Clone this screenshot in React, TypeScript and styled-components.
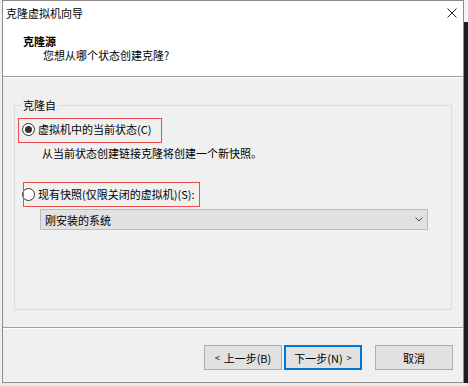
import { createGlobalStyle, styled } from "styled-components"

const GlobalStyle = createGlobalStyle`
  html, body {
    margin: 0;
    padding: 0;
  }
  body {
    width: 468px;
    height: 386px;
    overflow: hidden;
    background: #e9e9e9;
    font-family: "Noto Sans CJK SC", "Microsoft YaHei", sans-serif;
    font-size: 11px;
    color: #000;
  }
`

const Desktop = styled.div`
  display: flex;
  flex-flow: row nowrap;
  align-items: flex-start;
  height: 386px;
`

const LeftEdge = styled.div`
  width: 2px;
  height: 383px;
  background: #eef0f2;
`

const RightEdge = styled.div`
  flex: 1;
  height: 383px;
  display: flex;
  flex-flow: column nowrap;

  .edge__top {
    height: 22px;
    background: #f4f4f4;
  }
  .edge__rest {
    flex: 1;
    background: #1c1c1c;
  }
`

const Window = styled.div`
  width: 462px;
  height: 383px;
  box-sizing: border-box;
  border: 1px solid #8c8c8c;
  background: #f0f0f0;
  display: flex;
  flex-flow: column nowrap;
`

const TitleBar = styled.div`
  height: 23px;
  background: #fff;
  display: flex;
  align-items: center;
  justify-content: space-between;
  padding: 0 6px 0 3px;
  line-height: 14px;

  svg {
    display: block;
    margin-right: 0;
  }
`

const Header = styled.div`
  height: 52px;
  box-sizing: border-box;
  background: #fff;
  padding: 10px 0 0 20px;

  .header__title {
    font-weight: bold;
    line-height: 14px;
  }
  .header__subtitle {
    line-height: 14px;
    padding-left: 20px;
  }
`

const Separator = styled.div`
  height: 0;
  border-top: 1px solid #a0a0a0;
  border-bottom: 1px solid #fff;
`

const Body = styled.div`
  height: 249px;
  box-sizing: border-box;
  padding-top: 19px;
  overflow: hidden;
`

const GroupBox = styled.fieldset`
  margin: 0 11px;
  padding: 0 0 79px 0;
  border: 1px solid #dcdcdc;
  min-width: 0;

  legend {
    margin-left: 6px;
    padding: 0 2px;
    line-height: 16px;
  }
`

const OptionRow = styled.label<{ $top: number }>`
  position: relative;
  display: flex;
  align-items: center;
  gap: 3px;
  height: 16px;
  line-height: 16px;
  margin: ${p => p.$top}px 0 0 7px;
  white-space: nowrap;
`

const Radio = styled.span<{ $checked?: boolean }>`
  width: 13px;
  height: 13px;
  box-sizing: border-box;
  border: 1px solid #333;
  border-radius: 50%;
  background: #fff;
  display: flex;
  align-items: center;
  justify-content: center;

  &::after {
    content: "";
    width: 7px;
    height: 7px;
    border-radius: 50%;
    background: ${p => (p.$checked ? "#333" : "transparent")};
  }
`

// red annotation box drawn over the option
const Highlight = styled.span<{ $x: number; $y: number; $w: number; $h: number }>`
  position: absolute;
  left: ${p => p.$x}px;
  top: ${p => p.$y}px;
  width: ${p => p.$w}px;
  height: ${p => p.$h}px;
  box-sizing: border-box;
  border: 1px solid #e84c4c;
  pointer-events: none;
`

const Description = styled.p`
  margin: 8px 0 0 27px;
  line-height: 16px;
  white-space: nowrap;
`

const Select = styled.div`
  margin: 7px 0 0 25px;
  width: 388px;
  height: 21px;
  box-sizing: border-box;
  border: 1px solid #bcbcbc;
  background: #e1e1e1;
  display: flex;
  align-items: center;
  justify-content: space-between;
  padding: 0 4px 0 4px;
  line-height: 16px;
`

const Footer = styled.div`
  flex: 1;
  display: flex;
  justify-content: flex-end;
  align-items: flex-start;
  padding: 16px 10px 0 0;
`

const Button = styled.button<{ $default?: boolean; $gap?: number }>`
  width: 78px;
  height: 25px;
  margin-left: ${p => p.$gap ?? 0}px;
  box-sizing: border-box;
  border: 1px solid ${p => (p.$default ? "#0078d7" : "#adadad")};
  box-shadow: ${p => (p.$default ? "inset 0 0 0 1px #0078d7" : "none")};
  background: #e1e1e1;
  font-family: inherit;
  font-size: 11px;
  color: #000;
  padding: 0;
  display: flex;
  align-items: center;
  justify-content: center;
  gap: 4px;

  .btn__arrow {
    font-size: 9px;
  }
`

const CloseIcon = () => (
  <svg width="10" height="10" viewBox="0 0 10 10">
    <path d="M0.5 0.5 L9.5 9.5 M9.5 0.5 L0.5 9.5" stroke="#222" strokeWidth="1" fill="none" />
  </svg>
)

const ChevronIcon = () => (
  <svg width="8" height="5" viewBox="0 0 8 5">
    <path d="M0.5 0.5 L4 4 L7.5 0.5" stroke="#444" strokeWidth="1" fill="none" />
  </svg>
)

export default function App() {
  return (
    <>
      <GlobalStyle />
      <Desktop>
        <LeftEdge />
        <Window>
          <TitleBar>
            <span>克隆虚拟机向导</span>
            <CloseIcon />
          </TitleBar>
          <Header>
            <div className="header__title">克隆源</div>
            <div className="header__subtitle">您想从哪个状态创建克隆?</div>
          </Header>
          <Separator />
          <Body>
            <GroupBox>
              <legend>克隆自</legend>
              <OptionRow $top={8}>
                <Radio $checked />
                <span>虚拟机中的当前状态(C)</span>
                <Highlight $x={-4} $y={-3} $w={144} $h={25} />
              </OptionRow>
              <Description>从当前状态创建链接克隆将创建一个新快照。</Description>
              <OptionRow $top={25}>
                <Radio />
                <span>现有快照(仅限关闭的虚拟机)(S):</span>
                <Highlight $x={1} $y={-4} $w={177} $h={25} />
              </OptionRow>
              <Select>
                <span>刚安装的系统</span>
                <ChevronIcon />
              </Select>
            </GroupBox>
          </Body>
          <Separator />
          <Footer>
            <Button>
              <span className="btn__arrow">&lt;</span>
              <span>上一步(B)</span>
            </Button>
            <Button $default $gap={2}>
              <span>下一步(N)</span>
              <span className="btn__arrow">&gt;</span>
            </Button>
            <Button $gap={13}>取消</Button>
          </Footer>
        </Window>
        <RightEdge>
          <div className="edge__top" />
          <div className="edge__rest" />
        </RightEdge>
      </Desktop>
    </>
  )
}
